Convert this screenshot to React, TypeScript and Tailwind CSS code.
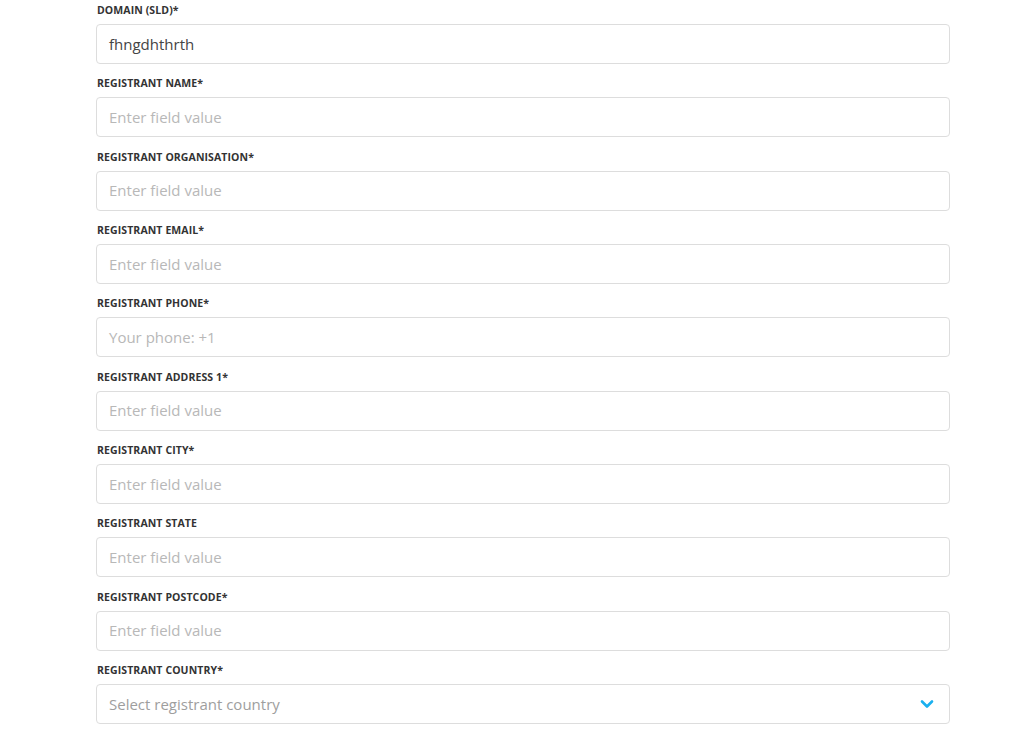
import React from "react";

const fields: { label: string; placeholder?: string; value?: string }[] = [
  { label: "DOMAIN (SLD)*", value: "fhngdhthrth" },
  { label: "REGISTRANT NAME*", placeholder: "Enter field value" },
  { label: "REGISTRANT ORGANISATION*", placeholder: "Enter field value" },
  { label: "REGISTRANT EMAIL*", placeholder: "Enter field value" },
  { label: "REGISTRANT PHONE*", placeholder: "Your phone: +1" },
  { label: "REGISTRANT ADDRESS 1*", placeholder: "Enter field value" },
  { label: "REGISTRANT CITY*", placeholder: "Enter field value" },
  { label: "REGISTRANT STATE", placeholder: "Enter field value" },
  { label: "REGISTRANT POSTCODE*", placeholder: "Enter field value" },
];

export default function App() {
  return (
    <div
      className="w-[1024px] h-[743px] bg-white overflow-hidden"
      style={{ fontFamily: '"Open Sans", "Noto Sans", sans-serif' }}
    >
      <div className="ml-[96px] w-[854px] pt-[3px] flex flex-col gap-[12.33px]">
        {fields.map((f) => (
          <div key={f.label} className="flex flex-col">
            <label className="text-[10.5px] leading-[14px] font-bold text-[#333333] pl-[1px] tracking-[0.1px]">
              {f.label}
            </label>
            <div className="mt-[7px] h-[40px] border border-[#dddddd] rounded-[4px] flex items-center px-[12px] text-[15px]">
              {f.value ? (
                <span className="text-[#444444]">{f.value}</span>
              ) : (
                <span className="text-[#b8b8b8]">{f.placeholder}</span>
              )}
            </div>
          </div>
        ))}
        <div className="flex flex-col">
          <label className="text-[10.5px] leading-[14px] font-bold text-[#333333] pl-[1px] tracking-[0.1px]">
            REGISTRANT COUNTRY*
          </label>
          <div className="mt-[7px] h-[40px] border border-[#dddddd] rounded-[4px] flex items-center justify-between pl-[12px] pr-[15px] text-[15px]">
            <span className="text-[#9e9e9e]">Select registrant country</span>
            <svg width="14" height="10" viewBox="0 0 14 10" fill="none">
              <path d="M2 2.5 L7 7.5 L12 2.5" stroke="#1ab0ef" strokeWidth="2.6" strokeLinecap="round" strokeLinejoin="round" />
            </svg>
          </div>
        </div>
      </div>
    </div>
  );
}
